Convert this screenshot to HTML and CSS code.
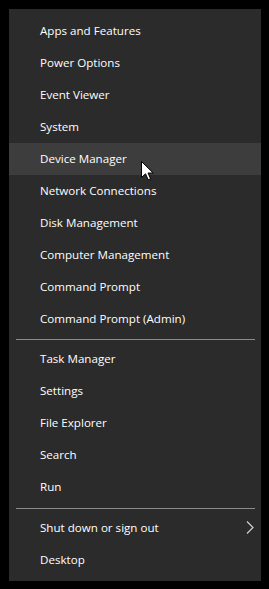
FILE: index.html
```html
<!DOCTYPE html>
<html>
<head>
<meta charset="utf-8">
<link rel="stylesheet" href="styles.css">
</head>
<body>
<div class="menu">
  <div class="item">Apps and Features</div>
  <div class="item">Power Options</div>
  <div class="item">Event Viewer</div>
  <div class="item">System</div>
  <div class="item hover">Device Manager
    <svg class="cursor" width="13" height="20" viewBox="0 0 13 20"><path d="M0.5 0.5 L0.5 16.5 L4.5 12.8 L7.2 18.8 L9.6 17.8 L7 12 L12.2 12 Z" fill="#fff" stroke="#000" stroke-width="1" stroke-linejoin="miter"/></svg>
  </div>
  <div class="item">Network Connections</div>
  <div class="item">Disk Management</div>
  <div class="item">Computer Management</div>
  <div class="item">Command Prompt</div>
  <div class="item">Command Prompt (Admin)</div>
  <div class="sep"></div>
  <div class="item">Task Manager</div>
  <div class="item">Settings</div>
  <div class="item">File Explorer</div>
  <div class="item">Search</div>
  <div class="item">Run</div>
  <div class="sep sep-low"></div>
  <div class="item">Shut down or sign out
    <svg class="chev" width="8" height="13" viewBox="0 0 8 13"><path d="M1 0.5 L7 6.5 L1 12.5" fill="none" stroke="#d0d0d0" stroke-width="1.2"/></svg>
  </div>
  <div class="item">Desktop</div>
</div>
</body>
</html>
```

FILE: styles.css
```css
html, body {
  margin: 0;
  padding: 0;
  background: #000;
}
body {
  width: 269px;
  height: 589px;
  overflow: hidden;
}
.menu {
  margin: 9px 0 0 9px;
  width: 252px;
  height: 572px;
  box-sizing: border-box;
  padding-top: 6px;
  background: #2b2b2b;
  font-family: "Open Sans", "Noto Sans", sans-serif;
  font-size: 11.6px;
  color: #fff;
}
.item {
  position: relative;
  height: 32px;
  box-sizing: border-box;
  display: flex;
  align-items: center;
  padding: 0 7px 2px 31px;
}
.item.hover {
  background: #3d3d3d;
}
.cursor {
  position: absolute;
  left: 132px;
  top: 18px;
}
.chev {
  margin-left: auto;
}
.sep {
  height: 1px;
  background: #8a8a8a;
  margin: 4px 6px 3px 7px;
}
.sep-low {
  margin-top: 5px;
}
```
